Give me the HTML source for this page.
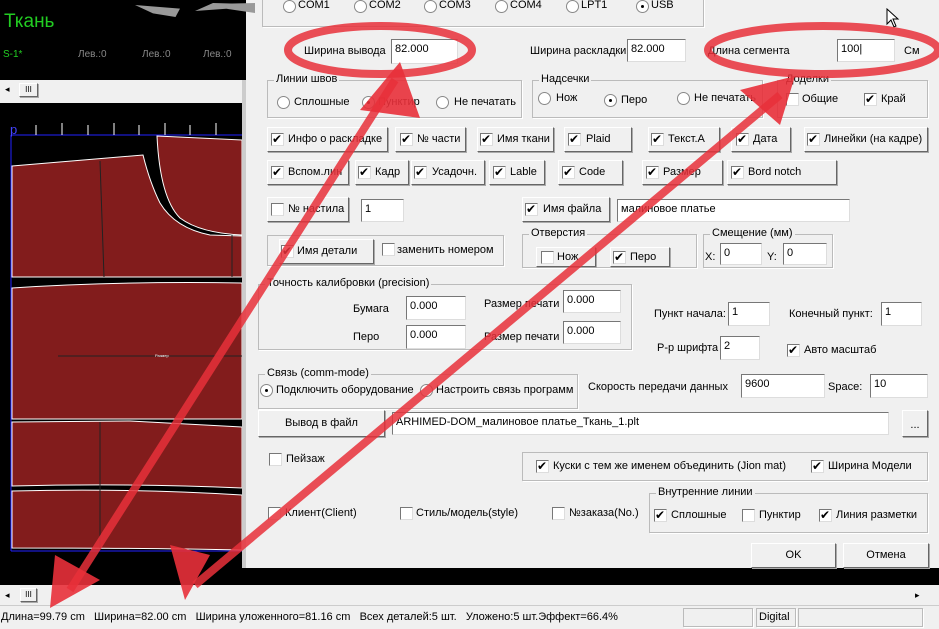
<!DOCTYPE html>
<html><head><meta charset="utf-8"><style>
body{margin:0;width:939px;height:628px;position:relative;overflow:hidden;background:#f0f0f0;font-family:"Liberation Sans",sans-serif;font-size:11px;color:#000}
.a{position:absolute;white-space:nowrap}
.in{position:absolute;background:#fff;border-top:1px solid #777;border-left:1px solid #777;border-right:1px solid #ddd;border-bottom:1px solid #ddd;box-sizing:border-box;padding:3px 3px;font-size:11px}
.btn{position:absolute;background:#f0f0f0;border:1px solid #fff;border-right-color:#666;border-bottom-color:#666;box-shadow:1px 1px 0 #aaa;box-sizing:border-box}
.g{position:absolute;border:1px solid #bbb;box-shadow:1px 1px 0 #fff;box-sizing:border-box}
.lg{position:absolute;top:-8px;left:6px;background:#f0f0f0;padding:0 2px}
.cb{position:absolute;width:11px;height:11px;background:#fff;border:1px solid #777;border-right-color:#ddd;border-bottom-color:#ddd}
.cb.k::after{content:"✔";position:absolute;left:0;top:-3px;font-size:12px;line-height:16px}
.rb{position:absolute;width:11px;height:11px;border-radius:50%;background:#fff;border:1px solid #888}
.rb.k::after{content:"";position:absolute;left:4px;top:4px;width:3px;height:3px;border-radius:50%;background:#000}
</style></head><body>
<!-- left panel -->
<div class="a" style="left:0;top:0;width:246px;height:80px;background:#000"></div>
<div class="a" style="left:210px;top:3px;width:45px;height:10px;background:#999;clip-path:polygon(0 10%,100% 0,100% 100%,40% 60%)"></div>
<div class="a" style="left:135px;top:5px;width:45px;height:12px;background:#999;clip-path:polygon(0 0,100% 30%,90% 100%,40% 70%)"></div>
<div class="a" style="left:195px;top:3px;width:45px;height:8px;background:#999;clip-path:polygon(0 100%,40% 0,100% 10%,100% 60%)"></div>
<div class="a" style="left:4px;top:11px;color:#2c2;font-size:19px">Ткань</div>
<div class="a" style="left:3px;top:49px;color:#2c2;font-size:10px">S-1*</div>
<div class="a" style="left:78px;top:49px;color:#888;font-size:10px">Лев.:0</div>
<div class="a" style="left:142px;top:49px;color:#888;font-size:10px">Лев.:0</div>
<div class="a" style="left:203px;top:49px;color:#888;font-size:10px">Лев.:0</div>
<div class="a" style="left:0;top:80px;width:242px;height:23px;background:#f0f0f0"></div>
<div class="a" style="left:5px;top:84px;font-size:9px">◂</div>
<div class="btn" style="left:19px;top:83px;width:19px;height:14px;font-size:8px;text-align:center;line-height:12px">III</div>
<div class="a" style="left:0;top:103px;width:242px;height:482px;background:#000"></div>
<div class="a" style="left:242px;top:80px;width:4px;height:490px;background:#ccc"></div>
<svg class="a" style="left:0;top:103px" width="242" height="467">
<line x1="11" y1="32" x2="242" y2="32" stroke="#22f" stroke-width="1"/>
<line x1="11" y1="32" x2="11" y2="448" stroke="#22f"/>
<line x1="11" y1="448" x2="242" y2="448" stroke="#22f"/>
<text x="10" y="31" fill="#44f" font-size="13" font-family="Liberation Sans">p</text>
<g stroke="#fff"><line x1="36" y1="22" x2="36" y2="32"/><line x1="62" y1="20" x2="62" y2="32"/><line x1="88" y1="22" x2="88" y2="32"/><line x1="114" y1="20" x2="114" y2="32"/><line x1="139" y1="22" x2="139" y2="32"/><line x1="165" y1="20" x2="165" y2="32"/><line x1="190" y1="22" x2="190" y2="32"/><line x1="216" y1="20" x2="216" y2="32"/></g>
<path d="M157 33 L242 37 L242 132 Q200 130 180 115 Q160 95 157 33Z" fill="#821c1c" stroke="#fff"/>
<path d="M12 63 L143 52 Q150 80 160 100 Q175 125 210 132 L242 133 L242 174 L12 174Z" fill="#821c1c" stroke="#fff"/>
<line x1="100" y1="58" x2="104" y2="174" stroke="#222"/>
<line x1="232" y1="132" x2="232" y2="174" stroke="#222"/>
<path d="M12 185 Q120 178 242 180 L242 316 L12 316Z" fill="#821c1c" stroke="#fff"/>
<line x1="58" y1="253" x2="242" y2="253" stroke="#222"/>
<text x="155" y="254" fill="#fff" font-size="4">Размер</text>
<path d="M12 319 L130 318 Q200 322 242 324 L242 385 Q130 380 12 383Z" fill="#821c1c" stroke="#fff"/>
<path d="M12 388 Q130 385 242 392 L242 447 Q150 445 12 445Z" fill="#821c1c" stroke="#fff"/>
<line x1="100" y1="319" x2="100" y2="445" stroke="#222"/>
</svg>
<!-- bottom -->
<div class="a" style="left:242px;top:568px;width:697px;height:17px;background:#000"></div>
<div class="a" style="left:0;top:585px;width:939px;height:20px;background:#f0f0f0"></div>
<div class="a" style="left:5px;top:590px;font-size:9px">◂</div>
<div class="btn" style="left:20px;top:588px;width:17px;height:14px;font-size:8px;text-align:center;line-height:12px">III</div>
<div class="a" style="left:915px;top:590px;font-size:9px">▸</div>
<div class="a" style="left:0;top:605px;width:939px;height:23px;background:#f0f0f0;border-top:1px solid #ccc"></div>
<div class="a" style="left:1px;top:611px;font-size:11px">Длина=99.79 cm&nbsp;&nbsp; Ширина=82.00 cm&nbsp;&nbsp; Ширина уложенного=81.16 cm&nbsp;&nbsp; Всех деталей:5 шт.&nbsp;&nbsp; Уложено:5 шт.Эффект=66.4%</div>
<div class="g" style="left:683px;top:608px;width:70px;height:19px"></div>
<div class="g" style="left:756px;top:608px;width:40px;height:19px"></div>
<div class="a" style="left:759px;top:611px">Digital</div>
<div class="g" style="left:798px;top:608px;width:125px;height:19px"></div>

<!-- dialog -->
<div class="g" style="left:262px;top:-5px;width:442px;height:32px"></div>
<div class="rb" style="left:283px;top:0"></div><div class="a" style="left:298px;top:-1px">COM1</div>
<div class="rb" style="left:354px;top:0"></div><div class="a" style="left:369px;top:-1px">COM2</div>
<div class="rb" style="left:424px;top:0"></div><div class="a" style="left:439px;top:-1px">COM3</div>
<div class="rb" style="left:495px;top:0"></div><div class="a" style="left:510px;top:-1px">COM4</div>
<div class="rb" style="left:566px;top:0"></div><div class="a" style="left:581px;top:-1px">LPT1</div>
<div class="rb k" style="left:636px;top:0"></div><div class="a" style="left:651px;top:-1px">USB</div>

<div class="a" style="left:304px;top:45px">Ширина вывода</div>
<div class="in" style="left:391px;top:39px;width:67px;height:25px">82.000</div>
<div class="a" style="left:530px;top:45px">Ширина раскладки</div>
<div class="in" style="left:627px;top:39px;width:59px;height:23px">82.000</div>
<div class="a" style="left:708px;top:45px">Длина сегмента</div>
<div class="in" style="left:837px;top:39px;width:58px;height:23px">100|</div>
<div class="a" style="left:904px;top:45px">См</div>

<div class="g" style="left:267px;top:80px;width:255px;height:38px"><span class="lg">Линии швов</span></div>
<div class="rb" style="left:277px;top:96px"></div><div class="a" style="left:294px;top:96px">Сплошные</div>
<div class="rb k" style="left:362px;top:96px"></div><div class="a" style="left:378px;top:96px">Пунктир</div>
<div class="rb" style="left:436px;top:96px"></div><div class="a" style="left:454px;top:96px">Не печатать</div>
<div class="g" style="left:532px;top:80px;width:231px;height:38px"><span class="lg">Надсечки</span></div>
<div class="rb" style="left:538px;top:92px"></div><div class="a" style="left:556px;top:92px">Нож</div>
<div class="rb k" style="left:604px;top:94px"></div><div class="a" style="left:621px;top:94px">Перо</div>
<div class="rb" style="left:677px;top:92px"></div><div class="a" style="left:694px;top:92px">Не печатать</div>
<div class="g" style="left:777px;top:80px;width:151px;height:38px"><span class="lg">Доделки</span></div>
<div class="cb" style="left:786px;top:93px"></div><div class="a" style="left:802px;top:93px">Общие</div>
<div class="cb k" style="left:864px;top:93px"></div><div class="a" style="left:881px;top:93px">Край</div>

<!-- row1 -->
<div class="btn" style="left:267px;top:127px;width:121px;height:25px"></div><div class="cb k" style="left:271px;top:133px"></div><div class="a" style="left:288px;top:133px">Инфо о раскладке</div>
<div class="btn" style="left:395px;top:127px;width:71px;height:25px"></div><div class="cb k" style="left:400px;top:133px"></div><div class="a" style="left:417px;top:133px">№ части</div>
<div class="btn" style="left:477px;top:127px;width:77px;height:25px"></div><div class="cb k" style="left:480px;top:133px"></div><div class="a" style="left:497px;top:133px">Имя ткани</div>
<div class="btn" style="left:564px;top:127px;width:68px;height:25px"></div><div class="cb k" style="left:568px;top:133px"></div><div class="a" style="left:586px;top:133px">Plaid</div>
<div class="btn" style="left:648px;top:127px;width:72px;height:25px"></div><div class="cb k" style="left:651px;top:133px"></div><div class="a" style="left:668px;top:133px">Текст.А</div>
<div class="btn" style="left:731px;top:127px;width:60px;height:25px"></div><div class="cb k" style="left:736px;top:133px"></div><div class="a" style="left:753px;top:133px">Дата</div>
<div class="btn" style="left:804px;top:127px;width:124px;height:25px"></div><div class="cb k" style="left:807px;top:133px"></div><div class="a" style="left:824px;top:133px">Линейки (на кадре)</div>
<!-- row2 -->
<div class="btn" style="left:267px;top:160px;width:82px;height:25px"></div><div class="cb k" style="left:271px;top:166px"></div><div class="a" style="left:288px;top:166px">Вспом.лин</div>
<div class="btn" style="left:355px;top:160px;width:54px;height:25px"></div><div class="cb k" style="left:358px;top:166px"></div><div class="a" style="left:375px;top:166px">Кадр</div>
<div class="btn" style="left:411px;top:160px;width:74px;height:25px"></div><div class="cb k" style="left:414px;top:166px"></div><div class="a" style="left:432px;top:166px">Усадочн.</div>
<div class="btn" style="left:489px;top:160px;width:56px;height:25px"></div><div class="cb k" style="left:493px;top:166px"></div><div class="a" style="left:510px;top:166px">Lable</div>
<div class="btn" style="left:558px;top:160px;width:65px;height:25px"></div><div class="cb k" style="left:562px;top:166px"></div><div class="a" style="left:579px;top:166px">Code</div>
<div class="btn" style="left:642px;top:160px;width:81px;height:25px"></div><div class="cb k" style="left:646px;top:166px"></div><div class="a" style="left:663px;top:166px">Размер</div>
<div class="btn" style="left:727px;top:160px;width:110px;height:25px"></div><div class="cb k" style="left:731px;top:166px"></div><div class="a" style="left:748px;top:166px">Bord notch</div>
<!-- row3 -->
<div class="btn" style="left:267px;top:197px;width:82px;height:25px"></div><div class="cb" style="left:271px;top:203px"></div><div class="a" style="left:288px;top:203px">№ настила</div>
<div class="in" style="left:361px;top:199px;width:43px;height:23px">1</div>
<div class="btn" style="left:522px;top:197px;width:88px;height:25px"></div><div class="cb k" style="left:525px;top:203px"></div><div class="a" style="left:543px;top:203px">Имя файла</div>
<div class="in" style="left:617px;top:199px;width:233px;height:23px">малиновое платье</div>
<!-- row4 -->
<div class="g" style="left:267px;top:235px;width:237px;height:31px"></div>
<div class="btn" style="left:279px;top:239px;width:95px;height:25px"></div><div class="cb k" style="left:281px;top:245px"></div><div class="a" style="left:297px;top:245px">Имя детали</div>
<div class="cb" style="left:382px;top:243px"></div><div class="a" style="left:397px;top:244px">заменить номером</div>
<div class="g" style="left:522px;top:234px;width:175px;height:34px"><span class="lg">Отверстия</span></div>
<div class="btn" style="left:536px;top:247px;width:60px;height:20px"></div><div class="cb" style="left:541px;top:251px"></div><div class="a" style="left:557px;top:251px">Нож</div>
<div class="btn" style="left:610px;top:247px;width:60px;height:20px"></div><div class="cb k" style="left:613px;top:251px"></div><div class="a" style="left:630px;top:251px">Перо</div>
<div class="g" style="left:703px;top:234px;width:130px;height:34px"><span class="lg">Смещение (мм)</span></div>
<div class="a" style="left:705px;top:251px">X:</div><div class="in" style="left:720px;top:243px;width:42px;height:22px">0</div>
<div class="a" style="left:767px;top:251px">Y:</div><div class="in" style="left:783px;top:243px;width:44px;height:22px">0</div>
<!-- precision -->
<div class="g" style="left:258px;top:284px;width:374px;height:66px"><span class="lg">Точность калибровки (precision)</span></div>
<div class="a" style="left:353px;top:303px">Бумага</div><div class="in" style="left:406px;top:296px;width:60px;height:24px">0.000</div>
<div class="a" style="left:484px;top:298px">Размер печати</div><div class="in" style="left:563px;top:290px;width:58px;height:23px">0.000</div>
<div class="a" style="left:353px;top:331px">Перо</div><div class="in" style="left:406px;top:325px;width:60px;height:24px">0.000</div>
<div class="a" style="left:484px;top:331px">Размер печати</div><div class="in" style="left:563px;top:321px;width:58px;height:23px">0.000</div>
<div class="a" style="left:654px;top:308px">Пункт начала:</div><div class="in" style="left:728px;top:302px;width:42px;height:24px">1</div>
<div class="a" style="left:789px;top:308px">Конечный пункт:</div><div class="in" style="left:881px;top:302px;width:41px;height:24px">1</div>
<div class="a" style="left:657px;top:342px">Р-р шрифта</div><div class="in" style="left:720px;top:336px;width:40px;height:24px">2</div>
<div class="cb k" style="left:787px;top:344px"></div><div class="a" style="left:804px;top:344px">Авто масштаб</div>
<!-- comm -->
<div class="g" style="left:258px;top:374px;width:320px;height:35px"><span class="lg">Связь (comm-mode)</span></div>
<div class="rb k" style="left:260px;top:384px"></div><div class="a" style="left:276px;top:384px">Подключить оборудование</div>
<div class="rb" style="left:420px;top:384px"></div><div class="a" style="left:436px;top:384px">Настроить связь программ</div>
<div class="a" style="left:588px;top:381px">Скорость передачи данных</div>
<div class="in" style="left:741px;top:374px;width:84px;height:24px">9600</div>
<div class="a" style="left:828px;top:381px">Space:</div>
<div class="in" style="left:870px;top:374px;width:58px;height:24px">10</div>
<div class="btn" style="left:258px;top:410px;width:127px;height:27px;text-align:center;line-height:25px">Вывод в файл</div>
<div class="in" style="left:392px;top:412px;width:497px;height:23px">ARHIMED-DOM_малиновое платье_Ткань_1.plt</div>
<div class="btn" style="left:902px;top:410px;width:26px;height:27px;text-align:center;line-height:28px">...</div>
<div class="cb" style="left:269px;top:453px"></div><div class="a" style="left:286px;top:453px">Пейзаж</div>
<div class="g" style="left:522px;top:452px;width:406px;height:29px"></div>
<div class="cb k" style="left:536px;top:460px"></div><div class="a" style="left:553px;top:460px">Куски с тем же именем объединить (Jion mat)</div>
<div class="cb k" style="left:811px;top:460px"></div><div class="a" style="left:828px;top:460px">Ширина Модели</div>
<div class="cb" style="left:268px;top:507px"></div><div class="a" style="left:285px;top:507px">Клиент(Client)</div>
<div class="cb" style="left:400px;top:507px"></div><div class="a" style="left:416px;top:507px">Стиль/модель(style)</div>
<div class="cb" style="left:552px;top:507px"></div><div class="a" style="left:569px;top:507px">№заказа(No.)</div>
<div class="g" style="left:649px;top:493px;width:279px;height:40px"><span class="lg">Внутренние линии</span></div>
<div class="cb k" style="left:654px;top:509px"></div><div class="a" style="left:671px;top:509px">Сплошные</div>
<div class="cb" style="left:742px;top:509px"></div><div class="a" style="left:759px;top:509px">Пунктир</div>
<div class="cb k" style="left:819px;top:509px"></div><div class="a" style="left:836px;top:509px">Линия разметки</div>
<div class="btn" style="left:751px;top:543px;width:85px;height:25px;text-align:center;line-height:23px">OK</div>
<div class="btn" style="left:843px;top:543px;width:86px;height:25px;text-align:center;line-height:23px">Отмена</div>
<svg class="a" style="left:886px;top:8px" width="16" height="22"><path d="M1 1 L1 16 L5 12 L8 19 L10 18 L7 11 L12 11Z" fill="#fff" stroke="#000"/></svg>

<!-- annotations -->
<svg class="a" style="left:0;top:0" width="939" height="628">
<g fill="none" stroke="#e8303a" stroke-opacity="0.85" stroke-width="8">
<ellipse cx="380" cy="50" rx="92" ry="24"/>
<ellipse cx="823" cy="50" rx="115" ry="24"/>
<line x1="395" y1="80" x2="70" y2="590"/>
<line x1="780" y1="95" x2="195" y2="585"/>
</g>
<g fill="#e8303a" fill-opacity="0.9">
<polygon points="400,62 360,110 420,118"/>
<polygon points="795,76 740,90 780,125"/>
<polygon points="50,608 55,555 100,580"/>
<polygon points="185,600 170,545 210,555"/>
</g>
</svg>
</body></html>
